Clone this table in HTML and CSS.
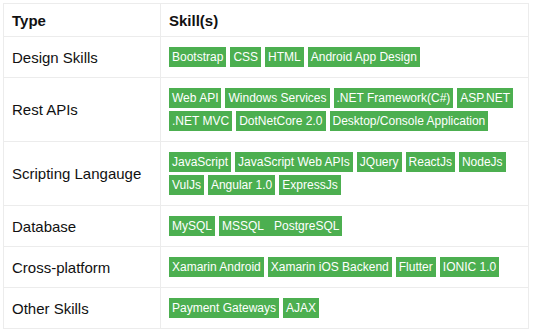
FILE: index.html
```html
<!DOCTYPE html>
<html>
<head>
<meta charset="utf-8">
<link rel="stylesheet" href="styles.css">
</head>
<body>
<div class="wrap">
<table class="skills">
  <thead>
    <tr><th class="type">Type</th><th>Skill(s)</th></tr>
  </thead>
  <tbody>
    <tr><td class="type">Design Skills</td><td><div class="tags"><span class="tag">Bootstrap</span><span class="tag">CSS</span><span class="tag">HTML</span><span class="tag">Android App Design</span></div></td></tr>
    <tr><td class="type">Rest APIs</td><td><div class="tags"><span class="tag">Web API</span><span class="tag">Windows Services</span><span class="tag">.NET Framework(C#)</span><span class="tag">ASP.NET</span><span class="tag">.NET MVC</span><span class="tag">DotNetCore 2.0</span><span class="tag">Desktop/Console Application</span></div></td></tr>
    <tr><td class="type">Scripting Langauge</td><td><div class="tags"><span class="tag">JavaScript</span><span class="tag">JavaScript Web APIs</span><span class="tag">JQuery</span><span class="tag">ReactJs</span><span class="tag">NodeJs</span><span class="tag">VulJs</span><span class="tag">Angular 1.0</span><span class="tag">ExpressJs</span></div></td></tr>
    <tr><td class="type">Database</td><td><div class="tags"><span class="tag">MySQL</span><span class="tag">MSSQL&nbsp;&nbsp; PostgreSQL</span></div></td></tr>
    <tr><td class="type">Cross-platform</td><td><div class="tags"><span class="tag">Xamarin Android</span><span class="tag">Xamarin iOS Backend</span><span class="tag">Flutter</span><span class="tag">IONIC 1.0</span></div></td></tr>
    <tr><td class="type">Other Skills</td><td><div class="tags"><span class="tag">Payment Gateways</span><span class="tag">AJAX</span></div></td></tr>
  </tbody>
</table>
</div>
</body>
</html>
```
FILE: styles.css
```css
html, body {
  margin: 0;
  padding: 0;
  background: #ffffff;
}
.wrap {
  padding: 3px 0 0 3px;
}
.skills {
  border-collapse: collapse;
  width: 526px;
  font-family: "Liberation Sans", Arial, sans-serif;
  color: #111;
  border: 1px solid #e6e6e6;
}
.skills th, .skills td {
  border: 1px solid #ececec;
  text-align: left;
  vertical-align: middle;
}
.skills th {
  font-size: 15px;
  font-weight: bold;
  height: 32px;
  padding: 0 8px;
}
.skills td {
  padding: 10px 4px 10px 8px;
}
.skills .type {
  width: 140px;
  font-size: 15px;
}
.tags {
  display: flex;
  flex-wrap: wrap;
  gap: 3px 4px;
}
.tag {
  background: #4caf50;
  color: #fff;
  font-size: 12px;
  line-height: 15px;
  padding: 3px 3px 2px;
  white-space: pre;
}
```
